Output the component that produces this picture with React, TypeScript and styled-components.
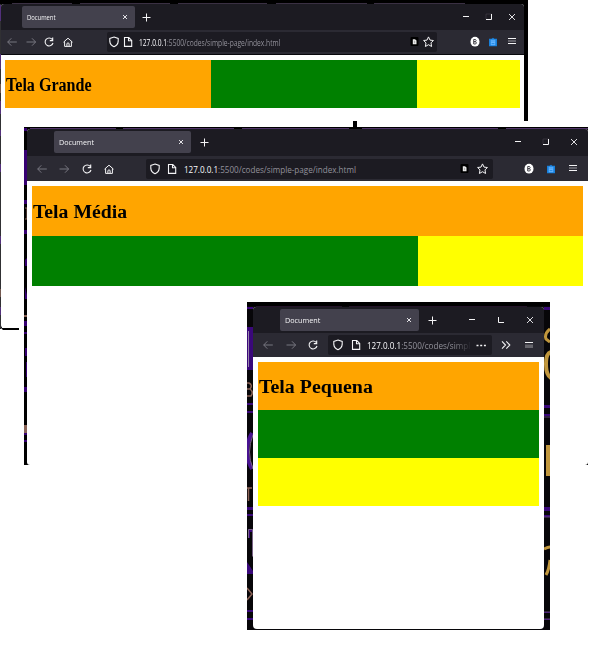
import React from "react";
import styled, { createGlobalStyle } from "styled-components";

const GlobalStyle = createGlobalStyle`
  * { box-sizing: border-box; }
  body { margin: 0; background: #fff; overflow: hidden; }
`;

const Desktop = styled.main`
  position: relative;
  width: 595px;
  height: 649px;
  background: #fff;
  overflow: hidden;
`;

const Frame = styled.section<{ $x: number; $y: number; $w: number; $h: number; $pad: string }>`
  position: absolute;
  left: ${(p) => p.$x}px;
  top: ${(p) => p.$y}px;
  width: ${(p) => p.$w}px;
  height: ${(p) => p.$h}px;
  padding: ${(p) => p.$pad};
  display: flex;
`;

const Wallpaper = styled.svg`
  position: absolute;
  inset: 0;
  width: 100%;
  height: 100%;
`;

const BrowserWindow = styled.div<{ $bottom: string }>`
  position: relative;
  flex: 1;
  min-width: 0;
  display: flex;
  flex-direction: column;
  background: #fff;
  border-radius: 3px 3px ${(p) => p.$bottom};
  overflow: hidden;
`;

const TitleBar = styled.header<{ $h: number; $left: number; $top: number }>`
  height: ${(p) => p.$h}px;
  padding: ${(p) => p.$top}px 0 0 ${(p) => p.$left}px;
  display: flex;
  background: #1c1b22;
  color: #f4f4f6;
`;

const Tab = styled.div<{ $w: number }>`
  width: ${(p) => p.$w}px;
  height: 22px;
  padding: 0 6px 0 5px;
  display: flex;
  align-items: center;
  justify-content: space-between;
  border-radius: 2px;
  background: #43414d;
`;

const TabTitle = styled.span<{ $squeeze: number }>`
  font: 7.2px/10px "Open Sans", "Noto Sans", sans-serif;
  white-space: nowrap;
  transform: scaleX(${(p) => p.$squeeze});
  transform-origin: left center;
`;

const Slot = styled.span<{ $w: number }>`
  flex: none;
  width: ${(p) => p.$w}px;
  height: 100%;
  display: flex;
  align-items: center;
  justify-content: center;
  svg { display: block; flex: none; }
`;

const NewTab = styled.span<{ $w: number }>`
  width: ${(p) => p.$w}px;
  height: 22px;
  display: flex;
  align-items: center;
  justify-content: center;
`;

const Controls = styled.div`
  height: 22px;
  margin-left: auto;
  display: flex;
`;

const Toolbar = styled.nav<{ $h: number; $left: number; $right: number; $line: boolean }>`
  height: ${(p) => p.$h}px;
  padding: 0 ${(p) => p.$right}px 0 ${(p) => p.$left}px;
  display: flex;
  align-items: center;
  background: #2b2a33;
  color: #f4f4f6;
  border-bottom: ${(p) => (p.$line ? "1px solid #08080c" : "none")};
`;

const AddressBar = styled.div<{ $gap: number; $w: number; $left: number; $right: number }>`
  width: ${(p) => p.$w}px;
  height: 20px;
  margin-left: ${(p) => p.$gap}px;
  padding: 0 ${(p) => p.$right}px 0 ${(p) => p.$left}px;
  display: flex;
  align-items: center;
  border-radius: 2px;
  background: #1c1b22;
`;

const UrlClip = styled.div<{ $gap: number; $fade: boolean }>`
  flex: 1;
  min-width: 0;
  height: 14px;
  margin-left: ${(p) => p.$gap}px;
  overflow: hidden;
  ${(p) => (p.$fade ? "mask-image: linear-gradient(to right, #000 82%, transparent 100%);" : "")}
`;

const Url = styled.span<{ $squeeze: number }>`
  display: inline-block;
  vertical-align: top;
  padding-top: 1px;
  font: 8.1px/13px "Open Sans", "Noto Sans", sans-serif;
  color: #92919a;
  white-space: nowrap;
  transform: scaleX(${(p) => p.$squeeze});
  transform-origin: left center;
  b { font-weight: 400; color: #fbfbfe; }
`;

const Extensions = styled.div`
  height: 100%;
  margin-left: auto;
  display: flex;
`;

const Page = styled.div<{ $columns: string; $row: number; $left: number }>`
  padding: 5px 5px 0 ${(p) => p.$left}px;
  display: grid;
  grid-template-columns: ${(p) => p.$columns};
  grid-auto-rows: ${(p) => p.$row}px;
`;

const Block = styled.div<{ $color: string; $full?: boolean }>`
  background: ${(p) => p.$color};
  grid-column: ${(p) => (p.$full ? "1 / -1" : "auto")};
  display: flex;
  align-items: center;
`;

const Heading = styled.h1<{ $squeeze: number }>`
  margin: 0 0 0 0.5px;
  font: bold 19.8px/24px "Liberation Serif", serif;
  color: #000;
  white-space: nowrap;
  transform: scaleX(${(p) => p.$squeeze});
  transform-origin: left center;
`;

type Glyph =
  | "back" | "forward" | "reload" | "home" | "shield" | "page" | "reader" | "star"
  | "account" | "addon" | "menu" | "menuShort" | "dots" | "more"
  | "plus" | "closeTab" | "minimize" | "maximize" | "close";

const glyphs: Record<Glyph, React.ReactNode> = {
  back: <path d="M10.8 6H1.7M5.3 2.3 1.7 6l3.6 3.7" stroke="#777680" />,
  forward: <path d="M1.5 6h9.1M7 2.3 10.6 6 7 9.7" stroke="#777680" />,
  reload: <path d="M9.3 3.5A4 4 0 1 0 10 7M9.7 1.6v3H6.8" strokeWidth="1.1" />,
  home: <path d="m1.5 6.2 4.5-4 4.5 4M2.6 5.4v5h6.8v-5M4.9 10.2V7.5q1.1-1.3 2.2 0v2.7" />,
  shield: <path d="M6 1 10.2 2.4v3q-.3 3.8-4.2 5.3-3.9-1.5-4.2-5.3v-3Z" strokeWidth="1.1" />,
  page: <path d="M2.5 1.5h4.3l2.900 2.900v6H2.5ZM6.5 1.5v3.200h3.200" strokeWidth="1.1" />,
  reader: (
    <>
      <rect x="2.5" y="1" width="8" height="9" rx="1" fill="#000" stroke="none" />
      <path d="M4.800 3.200h2.200L8.500 4.600V8.200H4.800Z" fill="#eee" stroke="none" />
      <path d="M5.900 5.300h1.300M5.900 6.700h1.300" stroke="#777" strokeWidth=".6" />
    </>
  ),
  star: <path d="m6.5 .9 1.5 3.2 3.4.4L9 6.9l.6 3.6-3.1-1.8-3.1 1.8L4 6.9 1.6 4.5 5 4.1Z" />,
  account: (
    <>
      <ellipse cx="6" cy="5.7" rx="4.5" ry="4.9" fill="#fff" stroke="none" />
      <path d="M4.7 3.5h1.8q1.3 1.1 0 2.2H4.7Zm0 2.2h2q1.4 1.2 0 2.3h-2Z" stroke="#35343c" strokeWidth=".9" />
    </>
  ),
  addon: (
    <>
      <path d="M2 2.8h2.6L6 1.8l1.4 1H10v7.4H2Z" fill="#1780dc" stroke="none" />
      <path d="M3.7 3.8h4.6v5.4H3.7Z" fill="#62b3ff" stroke="none" />
      <path d="M4.6 5h.9M6.5 5h.9M4.6 7.6h2.8" stroke="#1780dc" strokeWidth=".8" />
    </>
  ),
  menu: <><path d="M2 2.5h8M2 7.5h8" /><path d="M2 5h8" stroke="#77767e" strokeWidth="1.6" /></>,
  menuShort: <><path d="M2 3.5h8" /><path d="M2 6.5h8M2 8h8" stroke="#66656c" strokeWidth="2" /></>,
  dots: <path d="M1.5 6.5h2M5.2 6.5h2M8.9 6.5h2" strokeWidth="1.4" />,
  more: <path d="M2 2.4 5.5 6 2 9.6M6.3 2.4 9.8 6 6.3 9.6" strokeWidth="1.1" />,
  plus: <path d="M6.5 2.5v8M2.5 6.5h8" />,
  closeTab: <path d="m4 4 4 4M8 4 4 8" strokeWidth=".9" />,
  minimize: <path d="M3 5.5h6" />,
  maximize: <><path d="M3 3h6M3 3v5" stroke="#55535c" strokeWidth=".4" /><path d="M3 8.5h5.5V3" /></>,
  close: <path d="m3 3 6 6M9 3 3 9" strokeWidth=".9" />,
};

const Icon = ({ name, restoreLeft = false }: { name: Glyph; restoreLeft?: boolean }) => (
  <svg width="12" height="12" viewBox="0 0 12 12" fill="none" stroke="currentColor" strokeWidth="1">
    {restoreLeft ? <path d="M3.5 3v5.5H9" /> : glyphs[name]}
  </svg>
);

interface WindowSpec {
  title: string;
  frame: [number, number, number, number];
  pad: string;
  bottom: string;
  squeeze: number;
  urlSqueeze: number;
  titleBar: [number, number, number];
  tab: number;
  newTab: number;
  control: number;
  toolbar: [number, number, number];
  line: boolean;
  nav: Glyph[];
  navSlot: number;
  bar: [number, number, number, number];
  barSlot: number;
  urlGap: number;
  actions: Glyph[];
  actionSlot: number;
  extras: Glyph[];
  extraSlot: number;
  columns: string;
  pageLeft: number;
  row: number;
  full: boolean;
  wallpaper: React.ReactNode;
}

const windows: WindowSpec[] = [
  {
    title: "Tela Grande",
    frame: [0, 0, 528, 330],
    pad: "4px 4px 2px 1px",
    bottom: "0 3px",
    squeeze: 0.813,
    urlSqueeze: 0.822,
    titleBar: [26, 21, 2],
    tab: 113,
    newTab: 21,
    control: 23.2,
    toolbar: [25, 2.3, 3.4],
    line: true,
    nav: ["back", "forward", "reload", "home"],
    navSlot: 18.4,
    bar: [30.1, 330, 0, 1.3],
    barSlot: 14.3,
    urlGap: 3.4,
    actions: ["reader", "star"],
    actionSlot: 14.5,
    extras: ["account", "addon", "menu"],
    extraSlot: 18.2,
    columns: "206px 206px 103px",
    pageLeft: 4,
    row: 48,
    full: false,
    wallpaper: (
      <>
        <path d="M0 0h528v121h-4v-60H2v267h17v-2h8v2h-8v2H3l-3-3Z" fill="#000" />
        <path d="M12 3.5h60M80 3.5h90M178 3.5h89M276 3.5h91M374 3.5h91" stroke="#3a3043" />
        <path d="M0 4v325" stroke="#303033" strokeWidth="2" />
        <path d="M.5 5v16M.5 54v15M.5 101v13M.5 130v6M.5 164v8M.5 236v8M.5 307v8" stroke="#52307b" />
        <path d="M.5 84v9M.5 289v8" stroke="#735950" />
      </>
    ),
  },
  {
    title: "Tela Média",
    frame: [24, 127, 564, 338],
    pad: "2px 0 0 3px",
    bottom: "3px 3px",
    squeeze: 0.998,
    urlSqueeze: 1,
    titleBar: [27, 27, 2],
    tab: 137,
    newTab: 25,
    control: 28,
    toolbar: [25, 3.8, 3.9],
    line: false,
    nav: ["back", "forward", "reload", "home"],
    navSlot: 22.4,
    bar: [25.6, 347, 0, 1.5],
    barSlot: 17.5,
    urlGap: 3,
    actions: ["reader", "star"],
    actionSlot: 18,
    extras: ["account", "addon", "menu"],
    extraSlot: 22.2,
    columns: "386px 165px",
    pageLeft: 5,
    row: 50,
    full: true,
    wallpaper: (
      <>
        <path d="M0 0h564v6H3v332H0ZM3 330v8h4ZM564 334v4h-4Z" fill="#000" />
        <path d="M6 1.5h86M99 1.5h111M218 1.5h107M338 1.5h136M482 1.5h82" stroke="#503468" />
        <path d="M0 1h3v3H0ZM0 23h3v35H0ZM0 73h3v4H0ZM0 103h3v4H0ZM1 133l2-2v8H1ZM1 160l2 8v4H1ZM0 194h3v5H0ZM0 205h3v2H0ZM1 221h2v8H1ZM2 235h1v15H2ZM0 260h3v5H0ZM0 305h3v3H0ZM0 313h3v2H0Z" fill="#360072" />
        <path d="M1 81h2v11H1" stroke="#876255" fill="none" />
        <path d="M0 188h3v2H0ZM0 298h3v8H0Z" fill="#876255" />
      </>
    ),
  },
  {
    title: "Tela Pequena",
    frame: [247, 302, 303, 328],
    pad: "5px 6px 1px 6px",
    bottom: "4px 4px",
    squeeze: 1.008,
    urlSqueeze: 1,
    titleBar: [26, 27, 2],
    tab: 139,
    newTab: 25,
    control: 28.7,
    toolbar: [24, 4.2, 4],
    line: false,
    nav: ["back", "forward", "reload"],
    navSlot: 22.5,
    bar: [3.3, 164, 1, 1.5],
    barSlot: 18,
    urlGap: 2,
    actions: ["dots"],
    actionSlot: 18,
    extras: ["more", "menuShort"],
    extraSlot: 23,
    columns: "281px",
    pageLeft: 5,
    row: 48,
    full: false,
    wallpaper: (
      <>
        <path d="M0 0h303v328H0Z" fill="#070609" />
        <path d="M0 0h303v4H0Z" fill="#000" />
        <path d="M9 4.5h86M102 4.5h178" stroke="#241329" />
        <path d="M0 5h6v2H0ZM0 25h6v43H0ZM0 101h6v2H0ZM0 109h6v2H0ZM0 205h6v3H0ZM0 212h6v2H0ZM1 227h5v3H3v6H1ZM0 260l6 9v3H0ZM0 308h6v2H0ZM0 316h6v2H0ZM297 5h6v3h-6ZM297 103h6v3h-6ZM297 112h6v2h-6ZM297 205h6v4h-6ZM297 213h6v2h-6ZM297 310h6v1h-6ZM297 317h6v1h-6Z" fill="#3a087a" />
        <path d="M1.5 29v36" stroke="#9785a9" />
        <path d="M5 131q-10 18 0 36" stroke="#481291" strokeWidth="4" fill="none" />
        <path d="M6 133q-7 17 0 34M1.5 236v-8.5h4v27" stroke="#786286" fill="none" />
        <path d="M0 81h2q4 2 1 6H0h3q4 3 1 7H0M0 186h5M1.5 186v13M0 286l5 6-5 6" stroke="#8a6256" strokeWidth="1.5" fill="none" />
        <g stroke="#c1973d" fill="none">
          <path d="M303 27q-6 5-4 10l4 3" strokeWidth="3" />
          <path d="M304 50q-5 1-5 12t5 14" strokeWidth="4" />
          <path d="M301 143v31" strokeWidth="4" />
          <path d="M297 247q4-2 6-2M303 258q-1 10-4 15" strokeWidth="3" />
        </g>
        <path d="M297 115h6M297 215h6M297 310h6M297 317h6" stroke="#604178" />
      </>
    ),
  },
];

const Slots = ({ names, size }: { names: Glyph[]; size: number }) => (
  <>
    {names.map((name) => (
      <Slot key={name} $w={size}><Icon name={name} /></Slot>
    ))}
  </>
);

const Browser = ({ spec }: { spec: WindowSpec }) => {
  const [x, y, w, h] = spec.frame;
  const narrow = spec.actions.length === 1;
  return (
    <Frame $x={x} $y={y} $w={w} $h={h} $pad={spec.pad}>
      <Wallpaper viewBox={`0 0 ${w} ${h}`}>{spec.wallpaper}</Wallpaper>
      <BrowserWindow $bottom={spec.bottom}>
        <TitleBar $h={spec.titleBar[0]} $left={spec.titleBar[1]} $top={spec.titleBar[2]}>
          <Tab $w={spec.tab}>
            <TabTitle $squeeze={spec.squeeze}>Document</TabTitle>
            <Slot $w={8}><Icon name="closeTab" /></Slot>
          </Tab>
          <NewTab $w={spec.newTab}><Icon name="plus" /></NewTab>
          <Controls>
            <Slot $w={spec.control}><Icon name="minimize" /></Slot>
            <Slot $w={spec.control}><Icon name="maximize" restoreLeft={narrow} /></Slot>
            <Slot $w={spec.control}><Icon name="close" /></Slot>
          </Controls>
        </TitleBar>
        <Toolbar $h={spec.toolbar[0]} $left={spec.toolbar[1]} $right={spec.toolbar[2]} $line={spec.line}>
          <Slots names={spec.nav} size={spec.navSlot} />
          <AddressBar $gap={spec.bar[0]} $w={spec.bar[1]} $left={spec.bar[2]} $right={spec.bar[3]}>
            <Slots names={["shield", "page"]} size={spec.barSlot} />
            <UrlClip $gap={spec.urlGap} $fade={narrow}>
              <Url $squeeze={spec.urlSqueeze}>
                <b>127.0.0.1</b>:5500/codes/simp{narrow ? "l" : "le-page/index.html"}
              </Url>
            </UrlClip>
            <Slots names={spec.actions} size={spec.actionSlot} />
          </AddressBar>
          <Extensions><Slots names={spec.extras} size={spec.extraSlot} /></Extensions>
        </Toolbar>
        <Page $columns={spec.columns} $row={spec.row} $left={spec.pageLeft}>
          <Block $color="#ffa500" $full={spec.full}>
            <Heading $squeeze={spec.squeeze}>{spec.title}</Heading>
          </Block>
          <Block $color="#008000" />
          <Block $color="#ffff00" />
        </Page>
      </BrowserWindow>
    </Frame>
  );
};

const WallpaperSliver = styled.i`
  position: absolute;
  left: 353px;
  top: 121px;
  width: 4px;
  height: 6px;
  background: #000;
`;

export default function App() {
  return (
    <>
      <GlobalStyle />
      <Desktop>
        {windows.map((spec) => <Browser key={spec.title} spec={spec} />)}
        <WallpaperSliver />
      </Desktop>
    </>
  );
}
